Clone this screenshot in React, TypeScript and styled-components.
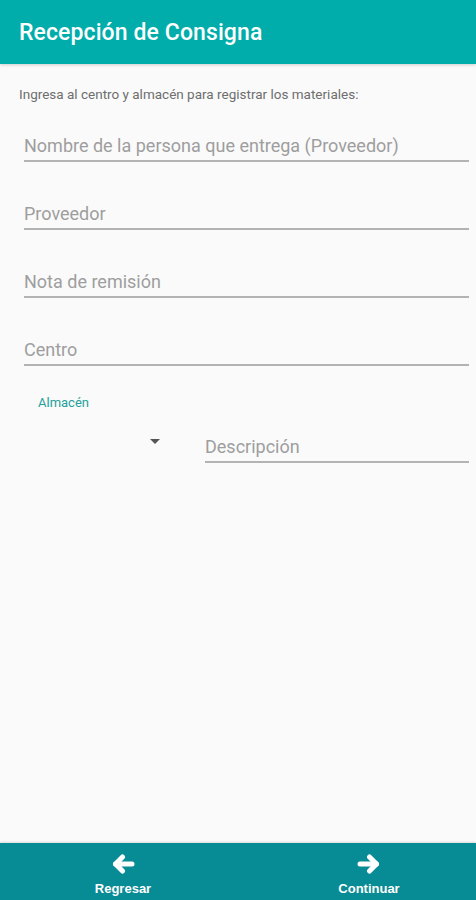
import React from "react";
import styled, { createGlobalStyle } from "styled-components";

const Global = createGlobalStyle`
  html, body { margin: 0; padding: 0; background: #fafafa; }
  body { font-family: Roboto, "Noto Sans", Arial, sans-serif; }
  * { box-sizing: border-box; }
`;

const Page = styled.div`
  height: 900px;
  display: flex;
  flex-direction: column;
  background: #fafafa;
`;

const Header = styled.header`
  height: 64px;
  flex: none;
  background: #00adaa;
  display: flex;
  align-items: center;
  padding: 1px 0 0 19px;
  box-shadow: 0 1px 3px rgba(0, 0, 0, 0.18);
  position: relative;
  z-index: 1;
`;

const Title = styled.h1`
  margin: 0;
  font-size: 23px;
  font-weight: 500;
  color: #ffffff;
  letter-spacing: 0.1px;
`;

const Content = styled.main`
  flex: 1;
  padding: 22px 7px 0 19px;
  display: flex;
  flex-direction: column;
`;

const Intro = styled.p`
  margin: 0 0 33px 0;
  font-size: 13.5px;
  line-height: 16px;
  color: #6e6e6e;
`;

const Field = styled.div<{ $gap?: number }>`
  margin: ${(p) => p.$gap ?? 0}px 0 0 5px;
  padding-bottom: 3px;
  border-bottom: 2px solid #b3b3b3;
  font-size: 18px;
  line-height: 22px;
  color: #9e9e9e;
`;

const DescField = styled(Field)`
  flex: 1;
`;

const Label = styled.div`
  margin: 29px 0 0 19px;
  font-size: 13px;
  line-height: 16px;
  color: #23a09b;
`;

const Row = styled.div`
  display: flex;
  align-items: flex-end;
  margin-top: 25px;
`;

const Picker = styled.div`
  width: 181px;
  height: 27px;
  display: flex;
  justify-content: flex-end;
  align-items: flex-start;
  padding: 3px 40px 0 0;
  flex: none;
`;

const Caret = styled.span`
  width: 0;
  height: 0;
  border-left: 5px solid transparent;
  border-right: 5px solid transparent;
  border-top: 5px solid #555;
`;

const BottomBar = styled.nav`
  height: 57px;
  flex: none;
  background: #078b94;
  display: flex;
  justify-content: space-between;
  padding: 11px 60px 0 76px;
  box-shadow: 0 -1px 2px rgba(0, 0, 0, 0.12);
`;

const NavButton = styled.div`
  width: 94px;
  display: flex;
  flex-direction: column;
  align-items: center;
  gap: 7px;
  color: #fff;
`;

const NavLabel = styled.span`
  font-family: "Liberation Sans", Arial, sans-serif;
  font-size: 13px;
  line-height: 15px;
  font-weight: 700;
`;

const Arrow = ({ dir }: { dir: "left" | "right" }) => (
  <svg width="24" height="20" viewBox="0 0 24 20">
    <g
      fill="none"
      stroke="#fff"
      strokeWidth="5"
      strokeLinecap="round"
      strokeLinejoin="round"
      transform={dir === "right" ? "translate(24 0) scale(-1 1)" : undefined}
    >
      <path d="M21 10H4.5" />
      <path d="M11.5 3L4.5 10L11.5 17" />
    </g>
  </svg>
);

export default function App() {
  return (
    <>
      <Global />
      <Page>
        <Header>
          <Title>Recepción de Consigna</Title>
        </Header>
        <Content>
          <Intro>Ingresa al centro y almacén para registrar los materiales:</Intro>
          <Field>Nombre de la persona que entrega (Proveedor)</Field>
          <Field $gap={41}>Proveedor</Field>
          <Field $gap={41}>Nota de remisión</Field>
          <Field $gap={41}>Centro</Field>
          <Label>Almacén</Label>
          <Row>
            <Picker>
              <Caret />
            </Picker>
            <DescField>Descripción</DescField>
          </Row>
        </Content>
        <BottomBar>
          <NavButton>
            <Arrow dir="left" />
            <NavLabel>Regresar</NavLabel>
          </NavButton>
          <NavButton>
            <Arrow dir="right" />
            <NavLabel>Continuar</NavLabel>
          </NavButton>
        </BottomBar>
      </Page>
    </>
  );
}
